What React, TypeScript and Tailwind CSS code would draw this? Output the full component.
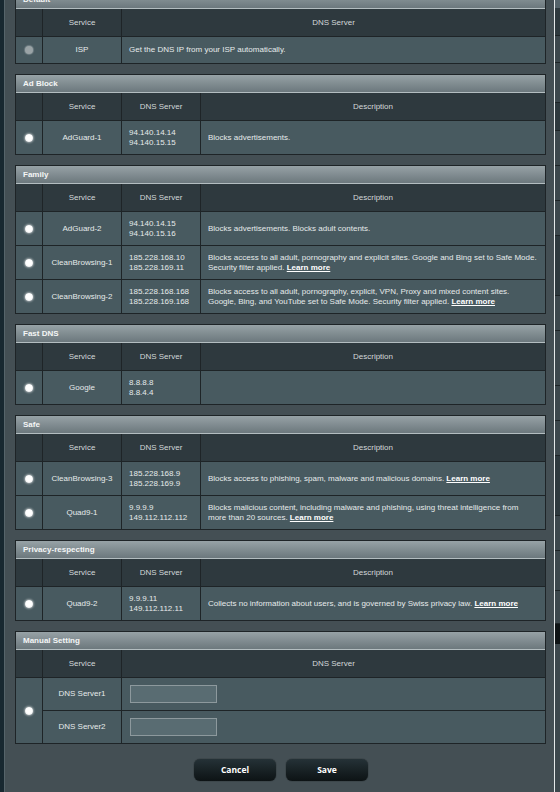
import React from "react";

type Row = {
  name: string;
  dns: string[];
  desc: string;
  learn?: boolean;
};

type Group = {
  title: string;
  rows: Row[];
};

const groups: Group[] = [
  {
    title: "Ad Block",
    rows: [{ name: "AdGuard-1", dns: ["94.140.14.14", "94.140.15.15"], desc: "Blocks advertisements." }],
  },
  {
    title: "Family",
    rows: [
      { name: "AdGuard-2", dns: ["94.140.14.15", "94.140.15.16"], desc: "Blocks advertisements. Blocks adult contents." },
      {
        name: "CleanBrowsing-1",
        dns: ["185.228.168.10", "185.228.169.11"],
        desc: "Blocks access to all adult, pornography and explicit sites. Google and Bing set to Safe Mode. Security filter applied.",
        learn: true,
      },
      {
        name: "CleanBrowsing-2",
        dns: ["185.228.168.168", "185.228.169.168"],
        desc: "Blocks access to all adult, pornography, explicit, VPN, Proxy and mixed content sites. Google, Bing, and YouTube set to Safe Mode. Security filter applied.",
        learn: true,
      },
    ],
  },
  {
    title: "Fast DNS",
    rows: [{ name: "Google", dns: ["8.8.8.8", "8.8.4.4"], desc: "" }],
  },
  {
    title: "Safe",
    rows: [
      {
        name: "CleanBrowsing-3",
        dns: ["185.228.168.9", "185.228.169.9"],
        desc: "Blocks access to phishing, spam, malware and malicious domains.",
        learn: true,
      },
      {
        name: "Quad9-1",
        dns: ["9.9.9.9", "149.112.112.112"],
        desc: "Blocks malicious content, including malware and phishing, using threat intelligence from more than 20 sources.",
        learn: true,
      },
    ],
  },
  {
    title: "Privacy-respecting",
    rows: [
      {
        name: "Quad9-2",
        dns: ["9.9.9.11", "149.112.112.11"],
        desc: "Collects no information about users, and is governed by Swiss privacy law.",
        learn: true,
      },
    ],
  },
];

// radio redondo con brillo, como el original
function Radio({ off }: { off?: boolean }) {
  if (off) return <span className="block w-[8px] h-[8px] rounded-full bg-[#9aa3a6] shadow-[0_0_1px_1px_rgba(170,180,184,0.4)]" />;
  return (
    <span className="block w-[8px] h-[8px] rounded-full bg-[radial-gradient(circle_at_50%_45%,#ffffff_45%,#d8dcdd_100%)] shadow-[0_0_2px_1px_rgba(255,255,255,0.45)]" />
  );
}

function TitleBar({ title }: { title: string }) {
  return (
    <div className="h-[18px] flex items-center pl-[7px] bg-gradient-to-b from-[#97a2a6] to-[#6c787d] border-b border-[#b3bdc0] text-[8px] font-bold text-[#f4f6f6]">
      {title}
    </div>
  );
}

const headCell = "h-[27px] flex items-center justify-center bg-[#2e393e] text-[#d3d8d9]";
const dataCell = "bg-[#485a60] flex items-center";

function DnsTable({ group }: { group: Group }) {
  return (
    <div className="border border-[#1e2427] bg-[#1e2427]">
      <TitleBar title={group.title} />
      <div className="grid grid-cols-[26px_78px_78px_1fr] gap-px">
        <div className={headCell} />
        <div className={headCell}>Service</div>
        <div className={headCell}>DNS Server</div>
        <div className={headCell}>Description</div>
        {group.rows.map(r => (
          <React.Fragment key={r.name}>
            <div className={`${dataCell} h-[33px] justify-center`}>
              <Radio />
            </div>
            <div className={`${dataCell} justify-center`}>{r.name}</div>
            <div className={`${dataCell} px-[7px] leading-[10px]`}>
              <div>
                {r.dns.map(d => (
                  <div key={d}>{d}</div>
                ))}
              </div>
            </div>
            <div className={`${dataCell} px-[7px] leading-[10px]`}>
              <div>
                {r.desc}
                {r.learn && (
                  <>
                    {" "}
                    <span className="font-bold underline text-white">Learn more</span>
                  </>
                )}
              </div>
            </div>
          </React.Fragment>
        ))}
      </div>
    </div>
  );
}

function DefaultTable() {
  return (
    <div className="border border-[#1e2427] bg-[#1e2427]">
      <TitleBar title="Default" />
      <div className="grid grid-cols-[26px_78px_1fr] gap-px">
        <div className={headCell} />
        <div className={headCell}>Service</div>
        <div className={headCell}>DNS Server</div>
        <div className={`${dataCell} h-[26px] justify-center`}>
          <Radio off />
        </div>
        <div className={`${dataCell} justify-center`}>ISP</div>
        <div className={`${dataCell} px-[7px]`}>Get the DNS IP from your ISP automatically.</div>
      </div>
    </div>
  );
}

function ManualTable() {
  return (
    <div className="border border-[#1e2427] bg-[#1e2427]">
      <TitleBar title="Manual Setting" />
      <div className="grid grid-cols-[26px_78px_1fr] grid-rows-[27px_32px_32px] gap-px">
        <div className={headCell} />
        <div className={headCell}>Service</div>
        <div className={headCell}>DNS Server</div>
        <div className={`${dataCell} row-span-2 justify-center`}>
          <Radio />
        </div>
        <div className={`${dataCell} justify-center`}>DNS Server1</div>
        <div className={`${dataCell} pl-[8px]`}>
          <input className="w-[87px] h-[18px] bg-[#596c72] border border-[#8d999d] outline-none" />
        </div>
        <div className={`${dataCell} justify-center`}>DNS Server2</div>
        <div className={`${dataCell} pl-[8px]`}>
          <input className="w-[87px] h-[18px] bg-[#596c72] border border-[#8d999d] outline-none" />
        </div>
      </div>
    </div>
  );
}

export default function App() {
  const btn =
    "w-[82px] h-[22px] rounded-[6px] bg-gradient-to-b from-[#253237] to-[#0d1315] text-white text-[8.5px] font-bold font-['Open_Sans',sans-serif] shadow-[0_0_1px_#000]";

  return (
    <div className="w-[560px] h-[792px] flex overflow-hidden bg-[#2f3a3f] font-['Liberation_Sans',Arial,sans-serif] text-[8px] text-[#e6eaeb]">
      <div className="w-[4px] bg-[#182830]" />
      <div className="w-[550px] h-full bg-[#444f54] border-l border-[#56646a] pl-[10px] pr-[8px] overflow-hidden">
        <div className="-mt-[10px] flex flex-col gap-[10px]">
          <DefaultTable />
          {groups.map(g => (
            <DnsTable key={g.title} group={g} />
          ))}
          <ManualTable />
        </div>
        <div className="flex justify-center gap-[10px] mt-[15px] pl-[1px]">
          <button className={btn}>Cancel</button>
          <button className={btn}>Save</button>
        </div>
      </div>
      <div className="w-px bg-[#e4e8e9]" />
      {/* página de fondo que asoma por la derecha */}
      <div className="flex-1 flex flex-col bg-[#3c474c]">
        <div className="h-[8px] bg-[#55636a]" />
        <div className="h-[28px] border-b border-[#1e2427] bg-[#2e393e]" />
        <div className="h-[27px] border-b border-[#1e2427]" />
        <div className="h-[40px] border-b border-[#1e2427]" />
        <div className="h-[28px] border-b border-[#1e2427] bg-[#2e393e]" />
        <div className="h-[35px] border-b border-[#1e2427]" />
        <div className="h-[35px] border-b border-[#1e2427]" />
        <div className="h-[35px] border-b border-[#1e2427]" />
        <div className="h-[60px] border-b border-[#1e2427] bg-[#2e393e]" />
        <div className="h-[35px] border-b border-[#1e2427]" />
        <div className="h-[55px] border-b border-[#1e2427]" />
        <div className="h-[35px] border-b border-[#1e2427]" />
        <div className="h-[35px] border-b border-[#1e2427]" />
        <div className="h-[60px] border-b border-[#1e2427] bg-[#2e393e]" />
        <div className="h-[35px] border-b border-[#1e2427]" />
        <div className="h-[40px] border-b border-[#1e2427]" />
        <div className="h-[33px] border-b border-[#1e2427]" />
        <div className="h-[20px] bg-[#0f1416]" />
      </div>
    </div>
  );
}
